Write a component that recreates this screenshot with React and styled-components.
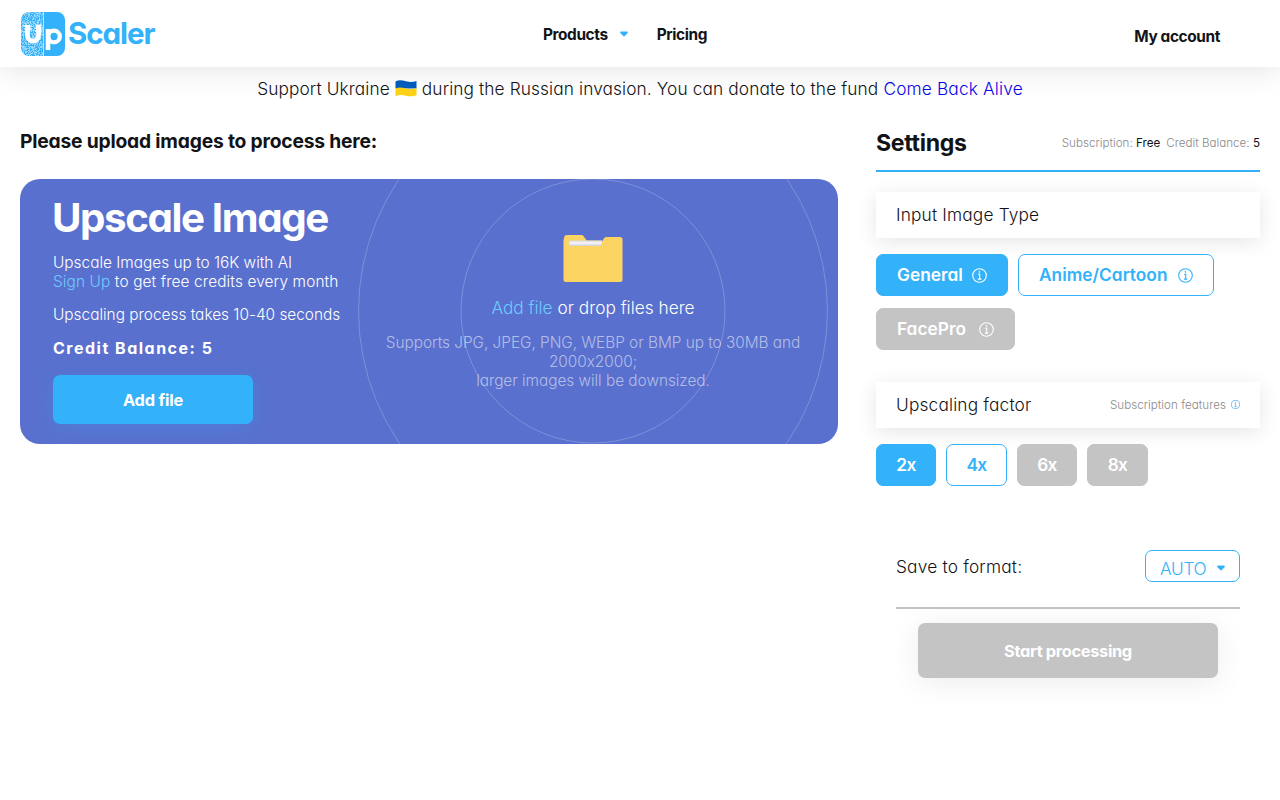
import React from 'react';
import styled, { createGlobalStyle } from 'styled-components';

const GlobalStyle = createGlobalStyle`
  * {
    box-sizing: border-box;
  }

  body {
    margin: 0;
    background: #ffffff;
    color: #121316;
    font-family: Inter, 'Liberation Sans', sans-serif;
    font-feature-settings: 'cv11' 1, 'calt' 0;
    font-size: 17.3px;
    font-weight: 350;
  }

  button {
    font-family: inherit;
    font-feature-settings: inherit;
    cursor: pointer;
  }

  a {
    text-decoration: none;
  }
`;

const Page = styled.div`
  min-height: 100vh;
`;

const Header = styled.header`
  display: grid;
  grid-template-columns: 1fr auto 1fr;
  height: 67px;
  padding: 0 60px 0 21px;
  background: #ffffff;
  box-shadow: 0 4px 30px rgba(0, 0, 0, 0.1);
`;

const Logo = styled.a`
  display: flex;
  align-items: flex-start;
  padding-top: 12px;
  color: #33b1f9;
`;

const LogoText = styled.span`
  margin-left: 3px;
  font-size: 29.5px;
  font-weight: 700;
  line-height: 42px;
  letter-spacing: -1.05px;
`;

const Nav = styled.nav`
  display: flex;
  gap: 29px;
  margin-left: 9px;
`;

const NavLink = styled.a`
  display: flex;
  align-items: center;
  gap: 12px;
  height: 68px;
  font-size: 15.4px;
  font-weight: 700;
  letter-spacing: -0.38px;
`;

const Account = styled(NavLink)`
  justify-self: end;
  height: 72px;
`;

const Banner = styled.p`
  display: flex;
  justify-content: center;
  align-items: center;
  gap: 5px;
  margin: 0;
  height: 43px;
  padding-bottom: 1px;
  letter-spacing: 0.11px;
`;

const BannerLink = styled.a`
  color: #0505e8;
  letter-spacing: 0.16px;
`;

const Main = styled.main`
  display: flex;
  gap: 38px;
  padding: 0 20px;
`;

const UploadSection = styled.section`
  width: 818px;
`;

const Heading = styled.h2`
  margin: 0;
  height: 69px;
  padding-top: 16px;
  font-size: 19.3px;
  font-weight: 700;
  line-height: 31px;
  letter-spacing: -0.21px;
`;

const UploadCard = styled.div`
  display: flex;
  height: 265px;
  border-radius: 20px;
  overflow: hidden;
  background: #5970ce;
  color: #ffffff;
  font-weight: 300;
`;

const Intro = styled.div`
  width: 328px;
  padding: 15px 0 0 33px;
  font-size: 15.4px;
  line-height: 19px;
`;

const Title = styled.h1`
  margin: 0 0 11px -1px;
  font-size: 40.3px;
  font-weight: 700;
  line-height: 48px;
  letter-spacing: -1.4px;
  white-space: nowrap;
`;

const Text = styled.p`
  margin: 5px 0 14px;
  white-space: nowrap;
`;

const SignUpLine = styled.span`
  letter-spacing: 0.12px;
`;

const Accent = styled.a`
  color: #6fcbff;
`;

const Balance = styled.p`
  margin: 15px 0 17px;
  font-size: 16px;
  font-weight: 700;
  letter-spacing: 1.5px;
`;

const AddButton = styled.button`
  display: block;
  width: 200px;
  height: 49px;
  border: 0;
  border-radius: 7px;
  background: #33b1f9;
  box-shadow: 0 4px 20px rgba(51, 177, 249, 0.22);
  color: #ffffff;
  font-size: 16.4px;
  font-weight: 700;
  letter-spacing: -0.2px;
`;

const DropZone = styled.div`
  position: relative;
  display: flex;
  flex-direction: column;
  align-items: center;
  width: 490px;
  padding-top: 56px;
  text-align: center;
`;

const Rings = styled.svg`
  position: absolute;
  top: 0;
  left: 0;
`;

const DropText = styled.p`
  position: relative;
  margin: 13px 0;
  line-height: 24px;
`;

const Hint = styled.p`
  position: relative;
  width: 440px;
  margin: 0;
  color: rgba(255, 255, 255, 0.55);
  font-size: 15.4px;
  line-height: 19px;
  letter-spacing: -0.04px;
`;

const Settings = styled.aside`
  width: 384px;
`;

const SettingsHead = styled.div`
  display: flex;
  justify-content: space-between;
  align-items: center;
  height: 62px;
  padding-top: 5px;
  border-bottom: 2px solid #33b1f9;
`;

const SettingsTitle = styled.h2`
  margin: 0;
  font-size: 23.1px;
  font-weight: 700;
  letter-spacing: -0.3px;
`;

const Status = styled.div`
  display: flex;
  gap: 6px;
  color: #8a8a8a;
  font-size: 11.6px;
  letter-spacing: 0.02px;

  b {
    color: #121316;
    font-weight: 400;
  }
`;

const OptionTitle = styled.div`
  display: flex;
  justify-content: space-between;
  align-items: center;
  height: 46px;
  margin-top: ${(props) => props.$top}px;
  padding: 0 20px 1px;
  background: #ffffff;
  box-shadow: 0 4px 20px rgba(0, 0, 0, 0.1);
  letter-spacing: 0.17px;
`;

const Features = styled.span`
  display: flex;
  align-items: center;
  gap: 5px;
  color: #8a8a8a;
  font-size: 11.6px;
  letter-spacing: 0.05px;
`;

const Options = styled.div`
  display: flex;
  flex-wrap: wrap;
  gap: 12px 10px;
  margin-top: 16px;
`;

const variants = {
  active: 'background: #33b1f9; border-color: #33b1f9; color: #ffffff;',
  outline: 'background: #ffffff; border-color: #33b1f9; color: #33b1f9;',
  disabled: 'background: #c4c4c4; border-color: #c4c4c4; color: #ffffff;',
};

const Option = styled.button`
  display: flex;
  align-items: center;
  justify-content: space-between;
  width: ${(props) => props.$width}px;
  height: 42px;
  padding: 0 20px;
  border: 1px solid;
  border-radius: 7px;
  font-size: 17.3px;
  font-weight: 600;
  line-height: 20px;
  letter-spacing: 0.02px;
  ${(props) => variants[props.$variant]}
`;

const Factor = styled(Option)`
  justify-content: center;
  padding: 0;
  letter-spacing: -0.6px;
`;

const SaveBox = styled.div`
  display: flex;
  justify-content: space-between;
  height: 59px;
  margin: 64px 20px 0;
  border-bottom: 2px solid #c4c4c4;
  line-height: 33px;
  letter-spacing: 0.2px;
`;

const FormatSelect = styled.button`
  display: flex;
  align-items: center;
  justify-content: space-between;
  width: 95px;
  height: 32px;
  padding: 4px 14px 0;
  border: 1px solid #33b1f9;
  border-radius: 7px;
  background: #ffffff;
  color: #33b1f9;
  font-size: 17.3px;
  font-weight: 350;
  letter-spacing: -0.3px;
`;

const StartButton = styled.button`
  display: block;
  width: 300px;
  height: 55px;
  margin: 14px 0 0 42px;
  border: 0;
  border-radius: 7px;
  background: #c4c4c4;
  box-shadow: 0 4px 30px rgba(0, 0, 0, 0.08);
  color: #ffffff;
  font-size: 16.4px;
  font-weight: 700;
  letter-spacing: -0.34px;
`;

// scattered dots for the low resolution half of the logo
const grain = Array.from({ length: 22 * 44 }, (_, i) => {
  const v = Math.abs(Math.sin(i * 12.9898 + 4.1) * 43758.5453) % 1;
  return { x: i % 22, y: Math.floor(i / 22), v };
}).filter((dot) => dot.v > 0.4);

const LogoIcon = () => (
  <svg width="44" height="44" viewBox="0 0 44 44">
    <defs>
      <clipPath id="logo-shape">
        <rect width="44" height="44" rx="8" />
      </clipPath>
    </defs>
    <g clipPath="url(#logo-shape)">
      <rect width="44" height="44" fill="#33b1f9" />
      {grain.map(({ x, y, v }) => (
        <rect key={`${x}-${y}`} x={x} y={y} width="1" height="1" fill="#ffffff" opacity={v * 0.6} />
      ))}
      <rect x="22" width="1" height="44" fill="#b9e3fd" />
      <path d="M6.5 13v10.5a5.5 5.5 0 0 0 11 0V13" fill="none" stroke="#ffffff" strokeWidth="4.8" />
      <path d="M2 14h9M3 17h8M2 20h7M14 13h7M13 16h8M14 19h7" stroke="#ffffff" strokeWidth="1" />
      <path d="M27 17v21" stroke="#ffffff" strokeWidth="4.6" />
      <circle cx="33" cy="24.5" r="5.8" fill="none" stroke="#ffffff" strokeWidth="4.3" />
    </g>
  </svg>
);

const Caret = () => (
  <svg width="8" height="6" viewBox="0 0 8 6">
    <path d="M1 .5h6q1.4.5.4 1.700L4.800 5q-.8.8-1.600 0L.6 2.200Q-.4 1 1 .5Z" fill="#33b1f9" />
  </svg>
);

const Flag = () => (
  <svg width="22" height="17" viewBox="0 0 22 17">
    <path d="M.5 1.500C4-.3 7 .3 11 1.300s7 1 10.500-.4V8.500H.5Z" fill="#005bbb" />
    <path d="M.5 8.300C4 7 7 7.500 11 8.400s7 .9 10.500-.5V15C18 16.800 15 16.600 11 15.700S4 14.800.5 16.300Z" fill="#fcd116" />
  </svg>
);

const Folder = () => (
  <svg width="60" height="48" viewBox="0 0 60 48">
    <path d="M1 3.500Q1 0 4 0h14.500q1.200 0 2 1l3.200 4.500H39V24H1Z" fill="#fcd462" />
    <path d="M5.500 5.500h34v7h-34Z" fill="#d5d6db" />
    <path d="M6.500 6.500h33v3h-33Z" fill="#f1f1f4" />
    <path d="M.5 11h37L40.500 4q1-2 3-2H57q2.500 0 2.500 2.500V44.500Q59.500 47 57 47H3Q.5 47 .5 44.500V5L1.500 2h4v9Z" fill="#fcd462" />
  </svg>
);

const Info = ({ size = 15, stroke = 'currentColor' }) => (
  <svg width={size} height={size} viewBox="0 0 15 15" fill="none" stroke={stroke}>
    <circle cx="7.500" cy="7.500" r="6.800" strokeWidth="1.100" />
    <path d="M6 6.300h1.700v4.600M5.900 11.100h3.500" strokeWidth="1.100" />
    <circle cx="7.400" cy="3.900" r=".55" fill={stroke} strokeWidth=".6" />
  </svg>
);

const imageTypes = [
  { label: 'General', variant: 'active', width: 132 },
  { label: 'Anime/Cartoon', variant: 'outline', width: 196 },
  { label: 'FacePro', variant: 'disabled', width: 139 },
];

const factors = [
  { label: '2x', variant: 'active', width: 60 },
  { label: '4x', variant: 'outline', width: 61 },
  { label: '6x', variant: 'disabled', width: 60 },
  { label: '8x', variant: 'disabled', width: 61 },
];

const App = () => {
  return (
    <Page>
      <GlobalStyle />
      <Header>
        <Logo>
          <LogoIcon />
          <LogoText>Scaler</LogoText>
        </Logo>
        <Nav>
          <NavLink>
            Products <Caret />
          </NavLink>
          <NavLink>Pricing</NavLink>
        </Nav>
        <Account>My account</Account>
      </Header>

      <Banner>
        <span>Support Ukraine</span>
        <Flag />
        <span>during the Russian invasion. You can donate to the fund</span>
        <BannerLink>Come Back Alive</BannerLink>
      </Banner>

      <Main>
        <UploadSection>
          <Heading>Please upload images to process here:</Heading>
          <UploadCard>
            <Intro>
              <Title>Upscale Image</Title>
              <Text>
                Upscale Images up to 16K with AI
                <br />
                <SignUpLine>
                  <Accent>Sign Up</Accent> to get free credits every month
                </SignUpLine>
              </Text>
              <Text>Upscaling process takes 10-40 seconds</Text>
              <Balance>Credit Balance: 5</Balance>
              <AddButton>Add file</AddButton>
            </Intro>
            <DropZone>
              <Rings width="490" height="265" fill="none" stroke="rgba(255, 255, 255, 0.22)">
                <circle cx="245" cy="132" r="132" />
                <circle cx="245" cy="132" r="234.500" />
              </Rings>
              <Folder />
              <DropText>
                <Accent>Add file</Accent> or drop files here
              </DropText>
              <Hint>
                Supports JPG, JPEG, PNG, WEBP or BMP up to 30MB and 2000x2000;
                <br />
                larger images will be downsized.
              </Hint>
            </DropZone>
          </UploadCard>
        </UploadSection>

        <Settings>
          <SettingsHead>
            <SettingsTitle>Settings</SettingsTitle>
            <Status>
              <span>
                Subscription: <b>Free</b>
              </span>
              <span>
                Credit Balance: <b>5</b>
              </span>
            </Status>
          </SettingsHead>

          <OptionTitle $top={20}>Input Image Type</OptionTitle>
          <Options>
            {imageTypes.map((type) => (
              <Option key={type.label} $variant={type.variant} $width={type.width}>
                {type.label}
                <Info />
              </Option>
            ))}
          </Options>

          <OptionTitle $top={32}>
            Upscaling factor
            <Features>
              Subscription features
              <Info size={9} stroke="#33a0f0" />
            </Features>
          </OptionTitle>
          <Options>
            {factors.map((factor) => (
              <Factor key={factor.label} $variant={factor.variant} $width={factor.width}>
                {factor.label}
              </Factor>
            ))}
          </Options>

          <SaveBox>
            Save to format:
            <FormatSelect>
              AUTO <Caret />
            </FormatSelect>
          </SaveBox>
          <StartButton>Start processing</StartButton>
        </Settings>
      </Main>
    </Page>
  );
};

export default App;
